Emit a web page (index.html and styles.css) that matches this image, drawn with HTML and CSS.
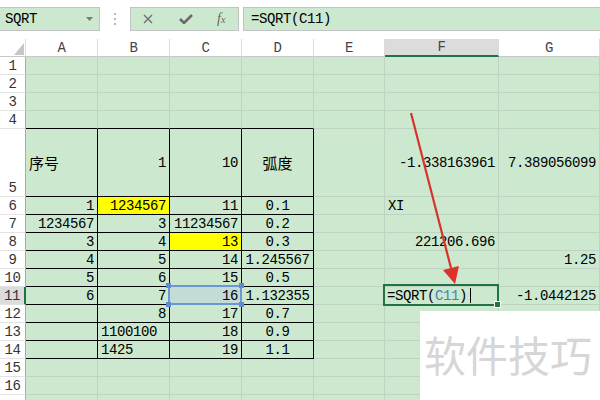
FILE: index.html
```html
<!DOCTYPE html>
<html lang="zh">
<head>
    <meta charset="UTF-8">
    <title>SQRT</title>
    <link rel="stylesheet" href="styles.css">
</head>
<body>
    <div class="formula-bar">
        <div class="name-box">
            <span>SQRT</span>
            <svg class="caret" width="7" height="4" viewBox="0 0 7 4"><path d="M0 0h7L3.5 4z" fill="#7a7a7a"/></svg>
        </div>
        <div class="dots">
            <svg width="3" height="12" viewBox="0 0 3 12"><rect x="0" y="0" width="2" height="2" fill="#b8b8b8"/><rect x="0" y="5" width="2" height="2" fill="#b8b8b8"/><rect x="0" y="10" width="2" height="2" fill="#b8b8b8"/></svg>
        </div>
        <div class="fx-buttons">
            <svg class="btn-x" width="10" height="10" viewBox="0 0 10 10"><path d="M1 1l8 8M9 1l-8 8" stroke="#707070" stroke-width="1.4"/></svg>
            <svg class="btn-ok" width="14" height="10" viewBox="0 0 14 10"><path d="M1 5l4 4 8-8" stroke="#6a6a6a" stroke-width="2.6" fill="none"/></svg>
            <span class="btn-fx">f<span>x</span></span>
        </div>
        <div class="formula-input">=SQRT(C11)</div>
    </div>

    <table class="sheet">
        <colgroup>
            <col style="width:26px"><col style="width:72px"><col style="width:72px"><col style="width:72px">
            <col style="width:72px"><col style="width:71px"><col style="width:114px"><col style="width:101px">
        </colgroup>
        <tr class="head">
            <th class="corner"><svg width="10" height="12" viewBox="0 0 10 12"><path d="M10 0v12H0z" fill="#c6c6c6"/></svg></th>
            <th>A</th><th>B</th><th>C</th><th>D</th><th>E</th><th class="sel">F</th><th>G</th>
        </tr>
        <tr><td class="rh">1</td><td></td><td></td><td></td><td></td><td></td><td></td><td></td></tr>
        <tr><td class="rh">2</td><td></td><td></td><td></td><td></td><td></td><td></td><td></td></tr>
        <tr><td class="rh">3</td><td></td><td></td><td></td><td></td><td></td><td></td><td></td></tr>
        <tr><td class="rh">4</td><td class="tb"></td><td class="tb"></td><td class="tb"></td><td class="tb"></td><td></td><td></td><td></td></tr>
        <tr class="tall">
            <td class="rh">5</td>
            <td class="t cn">序号</td><td class="t r">1</td><td class="t r">10</td><td class="t c cn">弧度</td>
            <td></td><td class="r">-1.338163961</td><td class="r">7.389056099</td>
        </tr>
        <tr><td class="rh">6</td><td class="t r">1</td><td class="t r yellow">1234567</td><td class="t r">11</td><td class="t c">0.1</td><td></td><td class="l">XI</td><td></td></tr>
        <tr><td class="rh">7</td><td class="t r">1234567</td><td class="t r">3</td><td class="t r">11234567</td><td class="t c">0.2</td><td></td><td></td><td></td></tr>
        <tr><td class="rh">8</td><td class="t r">3</td><td class="t r">4</td><td class="t r yellow">13</td><td class="t c">0.3</td><td></td><td class="r">221206.696</td><td></td></tr>
        <tr><td class="rh">9</td><td class="t r">4</td><td class="t r">5</td><td class="t r">14</td><td class="t c">1.245567</td><td></td><td></td><td class="r">1.25</td></tr>
        <tr><td class="rh">10</td><td class="t r">5</td><td class="t r">6</td><td class="t r">15</td><td class="t c">0.5</td><td></td><td></td><td></td></tr>
        <tr>
            <td class="rh active">11</td><td class="t r">6</td><td class="t r">7</td>
            <td class="t r ref">16<span class="ref-box"><i class="h tl"></i><i class="h tr"></i><i class="h bl"></i><i class="h br"></i></span></td>
            <td class="t c">1.132355</td><td></td>
            <td class="l edit">=SQRT(<span class="ref-text">C11</span>)<span class="cursor"></span><span class="edit-box"><i class="fill-handle"></i></span></td>
            <td class="r">-1.0442125</td>
        </tr>
        <tr><td class="rh">12</td><td class="t"></td><td class="t r">8</td><td class="t r">17</td><td class="t c mark">0.7</td><td></td><td></td><td></td></tr>
        <tr><td class="rh">13</td><td class="t"></td><td class="t l">1100100</td><td class="t r">18</td><td class="t c">0.9</td><td></td><td></td><td></td></tr>
        <tr><td class="rh">14</td><td class="t"></td><td class="t l">1425</td><td class="t r">19</td><td class="t c">1.1</td><td></td><td></td><td></td></tr>
        <tr><td class="rh">15</td><td></td><td></td><td></td><td></td><td></td><td></td><td></td></tr>
        <tr><td class="rh">16</td><td></td><td></td><td></td><td></td><td></td><td></td><td></td></tr>
        <tr><td class="rh"></td><td></td><td></td><td></td><td></td><td></td><td></td><td></td></tr>
    </table>

    <!-- annotation arrow drawn over the sheet -->
    <svg class="arrow" width="600" height="400" viewBox="0 0 600 400">
        <line x1="411" y1="113" x2="451" y2="268" stroke="#d8322c" stroke-width="2.2"/>
        <polygon points="455,284 443,270 459,266" fill="#e0302a"/>
    </svg>

    <div class="watermark">软件技巧</div>
</body>
</html>
```

FILE: styles.css
```css
body {
    margin: 0;
    width: 600px;
    height: 400px;
    overflow: hidden;
    position: relative;
    background: #fff;
    font-family: "Liberation Mono", "DejaVu Sans Mono", monospace;
    font-size: 14px;
    letter-spacing: -0.4px;
    color: #000;
}

/* formula bar */
.formula-bar {
    display: flex;
    height: 24px;
    margin-top: 7px;
}
.name-box {
    width: 100px;
    box-sizing: border-box;
    border: 1px solid #c3c3c3;
    border-left: none;
    background: #cce8cf;
    display: flex;
    align-items: center;
    justify-content: space-between;
    padding: 0 6px 0 5px;
}
.dots {
    width: 30px;
    display: flex;
    align-items: center;
    justify-content: center;
}
.fx-buttons {
    width: 109px;
    box-sizing: border-box;
    border: 1px solid #c3c3c3;
    background: #cce8cf;
    display: flex;
    align-items: center;
    padding-left: 12px;
}
.btn-ok { margin-left: 26px; }
.btn-fx {
    margin-left: 24px;
    font-family: "Liberation Serif", serif;
    font-style: italic;
    font-size: 14px;
    letter-spacing: 0;
    color: #666;
}
.btn-fx span { font-size: 10px; }
.formula-input {
    flex: 1;
    margin-left: 4px;
    border: 1px solid #c3c3c3;
    border-right: none;
    background: #cce8cf;
    padding-left: 7px;
    display: flex;
    align-items: center;
}

/* sheet grid */
.sheet {
    border-collapse: separate;
    border-spacing: 0;
    table-layout: fixed;
    width: 600px;
    margin-top: 8px;
}
.sheet tr { height: 18px; }
.sheet tr.tall { height: 68px; }
.sheet th, .sheet td {
    padding: 0 3px 0 3px;
    line-height: 16px;
    white-space: nowrap;
    overflow: visible;
    vertical-align: bottom;
    border-right: 1px solid #bed3c0;
    border-bottom: 1px solid #bed3c0;
    background: #cce8cf;
    font-weight: normal;
}
.sheet tr.tall td { vertical-align: middle; }
.sheet tr.tall td.rh { vertical-align: bottom; }
.sheet th {
    background: #fff;
    color: #444;
    font-size: 14px;
    border-right-color: #dadada;
    border-bottom-color: #c8c8c8;
    text-align: center;
    vertical-align: middle;
}
.sheet th.sel {
    background: #dcdcdc;
    border-bottom: 2px solid #217346;
}
.sheet th.corner {
    text-align: right;
    vertical-align: bottom;
    padding: 0 1px 1px 0;
    line-height: 0;
}
.sheet td.rh {
    background: #fff;
    color: #333;
    text-align: center;
    padding: 0;
    border-right-color: #ababab;
    border-bottom-color: #e2e2e2;
}
.sheet td.rh.active {
    background: #dcdcdc;
    border-right: 2px solid #217346;
}

.sheet td.tb { border-bottom-color: #000; }
.sheet td.t {
    border-right-color: #000;
    border-bottom-color: #000;
}
.sheet td.mark { box-shadow: 2px 0 0 #e9a89a; }

.r { text-align: right; }
.l { text-align: left; }
.c { text-align: center; }
.cn {
    font-family: "Noto Sans CJK SC", sans-serif;
    font-size: 15px;
    letter-spacing: 0;
}
.sheet td.yellow { background: #ffff00; }

/* reference highlight on C11 */
.sheet td.ref {
    position: relative;
    background: #c3dcd8;
}
.ref-box {
    position: absolute;
    left: -2px;
    top: -2px;
    right: -1px;
    bottom: -1px;
    border: 2px solid #6d97d4;
}
.h {
    position: absolute;
    width: 5px;
    height: 5px;
    background: #5f8bd0;
}
.h.tl { left: -4px; top: -4px; }
.h.tr { right: -4px; top: -4px; }
.h.bl { left: -4px; bottom: -4px; }
.h.br { right: -4px; bottom: -4px; }

/* cell being edited */
.sheet td.edit {
    position: relative;
    padding-left: 2px;
}
.ref-text { color: #4a7ebb; }
.cursor {
    display: inline-block;
    width: 1px;
    height: 15px;
    margin-left: 3px;
    vertical-align: -3px;
    background: #000;
}
.edit-box {
    position: absolute;
    left: -2px;
    top: -3px;
    right: -1px;
    bottom: -2px;
    border: 2px solid #217346;
}
.fill-handle {
    position: absolute;
    right: -4px;
    bottom: -4px;
    width: 5px;
    height: 5px;
    background: #217346;
    border: 1px solid #fff;
}

.arrow {
    position: absolute;
    left: 0;
    top: 0;
    pointer-events: none;
}
.watermark {
    position: absolute;
    left: 420px;
    top: 311px;
    width: 180px;
    height: 89px;
    box-sizing: border-box;
    padding: 18px 0 0 4px;
    background: #fff;
    color: #d6d6d6;
    font-family: "Noto Sans CJK SC", sans-serif;
    font-size: 42px;
    letter-spacing: 0;
    line-height: 50px;
    white-space: nowrap;
}
```
